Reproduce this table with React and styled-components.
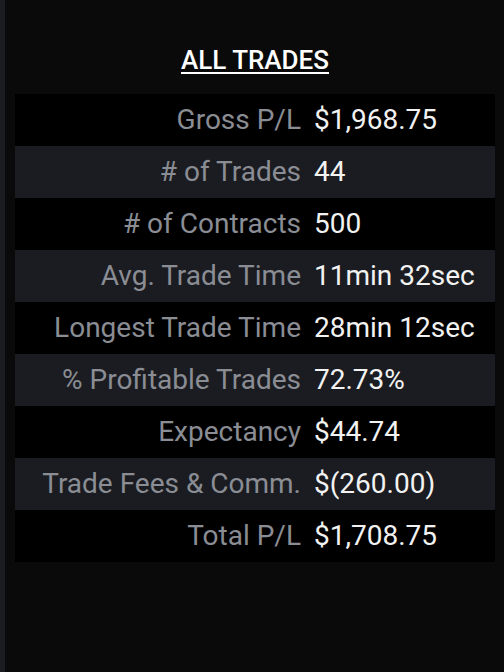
import React from "react";
import styled, { createGlobalStyle } from "styled-components";

const colors = {
  page: "#0a0a0b",
  rail: "#1b1c21",
  rowDark: "#000000",
  rowLight: "#1b1c21",
  label: "#8a8d94",
  value: "#f2f2f2",
  title: "#ffffff"
};

const GlobalStyle = createGlobalStyle`
  html, body {
    margin: 0;
    padding: 0;
    background: ${colors.page};
  }
  body {
    font-family: Roboto, "Liberation Sans", sans-serif;
  }
`;

const Screen = styled.div`
  display: flex;
  width: 504px;
  height: 672px;
  background: ${colors.page};
  overflow: hidden;
`;

const Rail = styled.div`
  width: 5px;
  flex-shrink: 0;
  background: ${colors.rail};
`;

const Content = styled.div`
  flex: 1;
  display: flex;
  flex-direction: column;
  padding: 43px 9px 0 10px;
`;

const Title = styled.h2`
  margin: 0 0 17px;
  text-align: center;
  font-size: 26px;
  font-weight: 500;
  line-height: 34px;
  color: ${colors.title};
  text-decoration: underline;
  text-decoration-thickness: 1.5px;
  text-underline-offset: 3px;
`;

const Table = styled.div`
  display: flex;
  flex-direction: column;
`;

const Row = styled.div`
  display: flex;
  align-items: center;
  box-sizing: border-box;
  height: 52px;
  padding-bottom: 2px;
  background: ${props => (props.striped ? colors.rowLight : colors.rowDark)};
  font-size: 28px;
`;

const Label = styled.div`
  width: 286px;
  flex-shrink: 0;
  padding-right: 14px;
  text-align: right;
  color: ${colors.label};
  white-space: nowrap;
`;

const Value = styled.div`
  margin-left: -1px;
  color: ${colors.value};
  white-space: nowrap;
`;

const stats = [
  ["Gross P/L", "$1,968.75"],
  ["# of Trades", "44"],
  ["# of Contracts", "500"],
  ["Avg. Trade Time", "11min 32sec"],
  ["Longest Trade Time", "28min 12sec"],
  ["% Profitable Trades", "72.73%"],
  ["Expectancy", "$44.74"],
  ["Trade Fees & Comm.", "$(260.00)"],
  ["Total P/L", "$1,708.75"]
];

export default function App() {
  return (
    <>
      <GlobalStyle />
      <Screen>
        <Rail />
        <Content>
          <Title>ALL TRADES</Title>
          <Table>
            {stats.map(([label, value], i) => (
              <Row key={label} striped={i % 2 === 1}>
                <Label>{label}</Label>
                <Value>{value}</Value>
              </Row>
            ))}
          </Table>
        </Content>
      </Screen>
    </>
  );
}
